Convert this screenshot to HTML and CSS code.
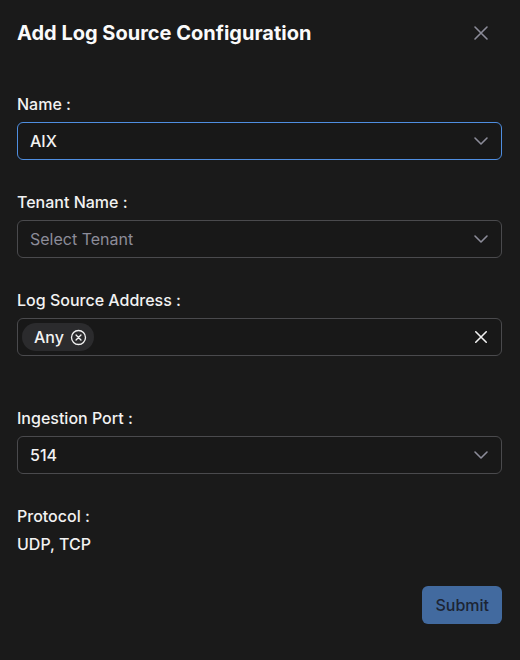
FILE: index.html
```html
<!DOCTYPE html>
<html lang="en">
<head>
  <meta charset="UTF-8">
  <meta name="viewport" content="width=device-width,initial-scale=1">
  <title>Add Log Source Configuration</title>
  <link rel="stylesheet" href="styles.css">
</head>
<body>
  <div class="modal">
    <div class="modal-head">
      <h1>Add Log Source Configuration</h1>
      <button class="close" type="button" aria-label="Close">
        <svg width="16" height="16" viewBox="0 0 16 16"><path d="M2 2L14 14M14 2L2 14" stroke="currentColor" stroke-width="1.6" stroke-linecap="round"/></svg>
      </button>
    </div>
    <form class="form">
      <div class="field">
        <label>Name :</label>
        <div class="select focused">
          <span class="value">AIX</span>
          <svg class="chev" width="16" height="16" viewBox="0 0 16 16"><path d="M2 5L8 11L14 5" fill="none" stroke="currentColor" stroke-width="1.6" stroke-linecap="round" stroke-linejoin="round"/></svg>
        </div>
      </div>
      <div class="field">
        <label>Tenant Name :</label>
        <div class="select">
          <span class="placeholder">Select Tenant</span>
          <svg class="chev" width="16" height="16" viewBox="0 0 16 16"><path d="M2 5L8 11L14 5" fill="none" stroke="currentColor" stroke-width="1.6" stroke-linecap="round" stroke-linejoin="round"/></svg>
        </div>
      </div>
      <div class="field wide">
        <label>Log Source Address :</label>
        <div class="select multi">
          <span class="chip">Any
            <svg width="17" height="17" viewBox="0 0 18 18"><circle cx="9" cy="9" r="7.4" fill="none" stroke="currentColor" stroke-width="1.4"/><path d="M6.4 6.4L11.6 11.6M11.6 6.4L6.4 11.6" stroke="currentColor" stroke-width="1.4" stroke-linecap="round"/></svg>
          </span>
          <svg class="clear" width="16" height="16" viewBox="0 0 16 16"><path d="M2 2L14 14M14 2L2 14" stroke="currentColor" stroke-width="1.8" stroke-linecap="round"/></svg>
        </div>
      </div>
      <div class="field">
        <label>Ingestion Port :</label>
        <div class="select">
          <span class="value">514</span>
          <svg class="chev" width="16" height="16" viewBox="0 0 16 16"><path d="M2 5L8 11L14 5" fill="none" stroke="currentColor" stroke-width="1.6" stroke-linecap="round" stroke-linejoin="round"/></svg>
        </div>
      </div>
      <div class="field info">
        <label>Protocol :</label>
        <div class="text">UDP, TCP</div>
      </div>
      <div class="actions">
        <button class="submit" type="submit">Submit</button>
      </div>
    </form>
  </div>
</body>
</html>
```

FILE: styles.css
```css
:root {
  --bg: #1a1a1a;
  --border: #4a4a4d;
  --focus: #4f8ee0;
  --text: #f2f2f2;
  --muted: #8c8c99;
  --chip: #2b2b2d;
  --accent: #426a9f;
  --font-sans: 'Inter', 'Noto Sans', 'Liberation Sans', sans-serif;
}
html, body {
  margin: 0;
  padding: 0;
  background: var(--bg);
}
body {
  font-family: var(--font-sans);
  color: var(--text);
  width: 520px;
  height: 660px;
  overflow: hidden;
}
.modal {
  padding: 19px 18px 0 17px;
}
.modal-head {
  display: flex;
  align-items: center;
  justify-content: space-between;
}
h1 {
  margin: 0;
  font-size: 20px;
  font-weight: 700;
  line-height: 28px;
  color: #fafafa;
}
.close {
  background: none;
  border: none;
  padding: 0;
  margin-right: 13px;
  width: 16px;
  height: 16px;
  color: var(--muted);
  display: flex;
  cursor: pointer;
}
.form {
  margin-top: 47px;
  display: flex;
  flex-direction: column;
}
.field {
  display: flex;
  flex-direction: column;
  margin-bottom: 32px;
}
.field.wide { margin-bottom: 52px; }
.field label {
  font-size: 16px;
  font-weight: 500;
  line-height: 20px;
  margin-bottom: 8px;
  color: var(--text);
}
.select {
  height: 38px;
  box-sizing: border-box;
  border: 1px solid var(--border);
  border-radius: 6px;
  background: #181818;
  display: flex;
  align-items: center;
  justify-content: space-between;
  padding: 0 12px 0 12px;
  font-size: 16px;
}
.select.focused { border-color: var(--focus); }
.select .value { font-weight: 500; }
.select .placeholder { color: var(--muted); }
.chev, .clear { color: var(--muted); flex: none; }
.clear { color: #f2f2f2; width: 14px; height: 14px; margin-right: 1px; }
.select.multi { padding-left: 4px; }
.chip {
  display: inline-flex;
  align-items: center;
  gap: 6px;
  height: 28px;
  padding: 0 7px 0 12px;
  border-radius: 14px;
  background: var(--chip);
  font-size: 16px;
  font-weight: 500;
}
.field.info { margin-bottom: 0; }
.field.info label { margin-bottom: 8px; }
.text {
  font-size: 16px;
  line-height: 20px;
  font-weight: 500;
}
.actions {
  display: flex;
  justify-content: flex-end;
  margin-top: 32px;
}
.submit {
  background: var(--accent);
  color: #1c2433;
  border: none;
  border-radius: 6px;
  height: 38px;
  padding: 0 13px;
  font-family: var(--font-sans);
  font-size: 16px;
  font-weight: 500;
  cursor: pointer;
}
```
